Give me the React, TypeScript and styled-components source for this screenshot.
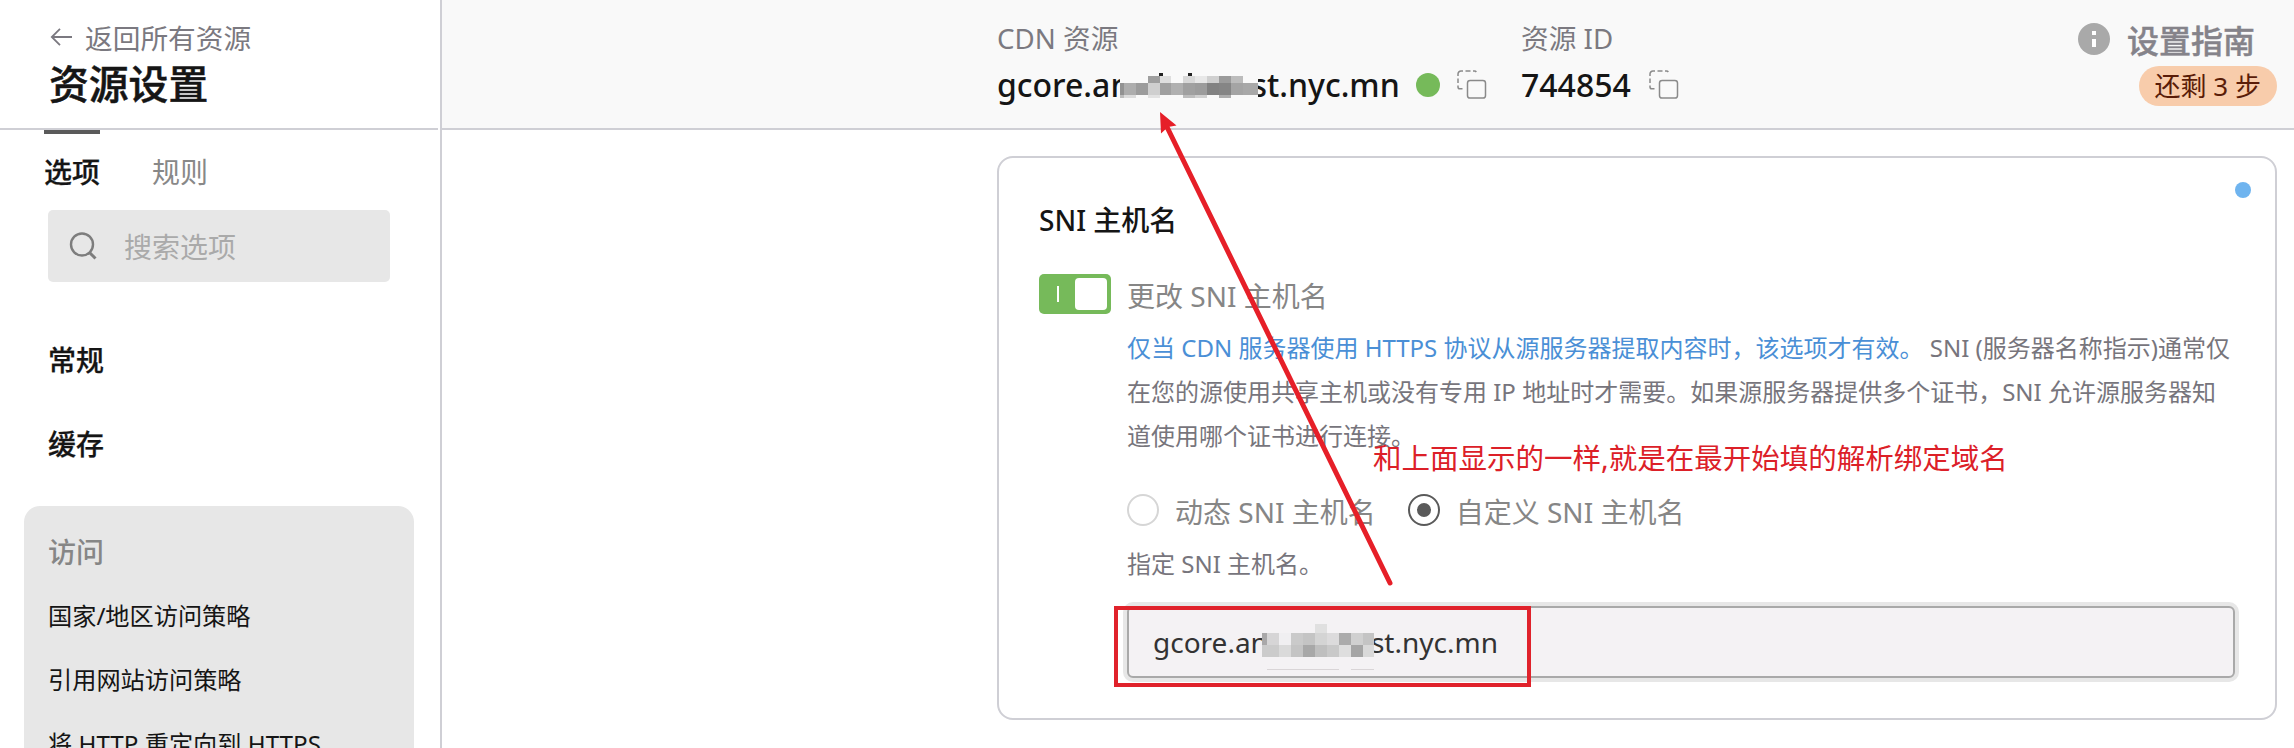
import React from "react";
import styled, { createGlobalStyle } from "styled-components";

const GlobalStyle = createGlobalStyle`
  * { box-sizing: border-box; }
  html, body { margin: 0; padding: 0; background: #fff; }
  body {
    width: 2294px;
    height: 748px;
    overflow: hidden;
    font-family: "Noto Sans", "Noto Sans CJK SC", sans-serif;
    font-size: 28px;
    color: #151515;
  }
`;

const line = "#cfcfd5";

const Page = styled.div`
  position: relative;
  display: flex;
  width: 2294px;
  height: 748px;
  overflow: hidden;
`;

const Sidebar = styled.aside`
  flex: 0 0 442px;
  height: 748px;
  border-right: 2px solid ${line};
  overflow: hidden;
`;

const SideHeader = styled.header`
  width: 438px;
  height: 130px;
  padding: 18px 0 0 49px;
  border-bottom: 2px solid ${line};
`;

const BackLink = styled.a`
  display: flex;
  align-items: center;
  gap: 12px;
  height: 40px;
  font-size: 27.7px;
  line-height: 40px;
  color: #7b7980;
`;

const Title = styled.h1`
  margin: 0;
  font-size: 39.8px;
  line-height: 52px;
  font-weight: 500;
  -webkit-text-stroke: 0.5px currentColor;
`;

const Tabs = styled.nav`
  display: flex;
  gap: 52px;
  padding-left: 44px;
  height: 80px;
`;

const Tab = styled.span<{ $active?: boolean }>`
  border-top: 4px solid ${(p) => (p.$active ? "#5a5a5a" : "transparent")};
  padding-top: 18px;
  line-height: 40px;
  font-weight: ${(p) => (p.$active ? 500 : 400)};
  -webkit-text-stroke: ${(p) => (p.$active ? 0.25 : 0)}px currentColor;
  color: ${(p) => (p.$active ? "#151515" : "#888")};
`;

const Search = styled.div`
  display: flex;
  align-items: center;
  gap: 27px;
  width: 342px;
  height: 72px;
  margin-left: 48px;
  padding-left: 21px;
  border-radius: 5px;
  background: #e7e7e7;
  color: #aaa;
`;

const Groups = styled.div`
  display: flex;
  flex-direction: column;
  gap: 44px;
  padding: 58px 0 42px 48px;
`;

const Group = styled.div<{ $muted?: boolean }>`
  font-weight: 500;
  line-height: 40px;
  -webkit-text-stroke: ${(p) => (p.$muted ? 0 : 0.25)}px currentColor;
  color: ${(p) => (p.$muted ? "#868686" : "#151515")};
`;

const OpenGroup = styled.div`
  width: 390px;
  height: 300px;
  margin-left: 24px;
  padding: 26px 24px;
  border-radius: 16px;
  background: #e7e7e7;
`;

const SubItem = styled.div`
  font-size: 24.2px;
  line-height: 40px;
  margin-top: 24px;
  white-space: nowrap;
`;

const Main = styled.main`
  flex: 1;
  min-width: 0;
`;

const TopBar = styled.header`
  display: flex;
  height: 130px;
  padding: 18px 17px 0 555px;
  background: #f9f9f9;
  border-bottom: 2px solid ${line};
`;

const Fact = styled.div<{ $width: number }>`
  width: ${(p) => p.$width}px;
`;

const FactLabel = styled.div`
  font-size: 27.7px;
  line-height: 40px;
  color: #7b7980;
`;

const FactValue = styled.div`
  display: flex;
  align-items: center;
  height: 54px;
  font-size: 32px;
  line-height: 54px;
  font-weight: 500;
  white-space: pre;
`;

const StatusDot = styled.i`
  width: 24px;
  height: 24px;
  margin: 0 17px 0 16px;
  border-radius: 50%;
  background: #76ba5a;
`;

const ValueGap = styled.span`
  width: 18px;
`;

const Guide = styled.div`
  display: flex;
  flex-direction: column;
  align-items: flex-end;
  margin-left: auto;
`;

const GuideTitle = styled.div`
  display: flex;
  align-items: center;
  gap: 17px;
  height: 42px;
  margin-right: 22px;
  font-size: 32px;
  font-weight: 500;
  -webkit-text-stroke: 0.4px currentColor;
  color: #85838a;
`;

const StepsBadge = styled.div`
  height: 40px;
  margin-top: 6px;
  padding: 0 16px;
  border-radius: 20px;
  background: #f8ccab;
  color: #5a1c08;
  font-size: 26px;
  line-height: 40px;
`;

const Card = styled.section`
  display: flex;
  flex-direction: column;
  position: relative;
  width: 1280px;
  height: 564px;
  margin: 26px 0 0 555px;
  padding: 42px 40px 0;
  border: 2px solid ${line};
  border-radius: 16px;
`;

const ChangedDot = styled.i`
  position: absolute;
  top: 24px;
  right: 24px;
  width: 16px;
  height: 16px;
  border-radius: 50%;
  background: #6fb4ef;
`;

const CardTitle = styled.h2`
  margin: 0;
  font-size: 28px;
  line-height: 40px;
  font-weight: 500;
`;

const SwitchRow = styled.div`
  display: flex;
  gap: 16px;
  margin-top: 34px;
  color: #868686;
  line-height: 44px;
`;

const Switch = styled.div`
  display: flex;
  align-items: center;
  justify-content: space-between;
  width: 72px;
  height: 40px;
  padding: 4px 4px 4px 18px;
  border-radius: 5px;
  background: #76ba5a;
`;

const SwitchMark = styled.i`
  width: 2px;
  height: 16px;
  background: #fff;
`;

const SwitchKnob = styled.i`
  width: 32px;
  height: 32px;
  border-radius: 4px;
  background: #fff;
`;

const Details = styled.div`
  padding-left: 88px;
`;

const Description = styled.p`
  margin: 8px 0 0;
  font-size: 24px;
  line-height: 44px;
  color: #77757c;
  white-space: nowrap;
`;

const Accent = styled.span`
  color: #4a8fd6;
`;

const Radios = styled.div`
  display: flex;
  align-items: center;
  gap: 32px;
  height: 40px;
  margin-top: 32px;
`;

const Radio = styled.label`
  display: flex;
  align-items: center;
  gap: 16px;
  color: #868686;
`;

const RadioText = styled.span`
  padding-top: 4px;
  line-height: 36px;
`;

const RadioRing = styled.i<{ $on?: boolean }>`
  display: flex;
  align-items: center;
  justify-content: center;
  width: 32px;
  height: 32px;
  border: 2px solid ${(p) => (p.$on ? "#5a5a5a" : "#d6d6d6")};
  border-radius: 50%;
  &::after {
    content: "";
    width: 14px;
    height: 14px;
    border-radius: 50%;
    background: ${(p) => (p.$on ? "#5a5a5a" : "transparent")};
  }
`;

const Hint = styled.div`
  margin-top: 14px;
  font-size: 24px;
  line-height: 40px;
  color: #77757c;
`;

const Field = styled.div`
  display: flex;
  align-items: center;
  width: 1108px;
  height: 72px;
  margin-top: 22px;
  padding-left: 24px;
  border: 2px solid #a9a9a9;
  border-radius: 6px;
  box-shadow: 0 0 0 4px #e7e7e7;
  background: #f4f2f4;
  color: #333;
`;

const Redaction = styled.svg<{ $before: number; $after: number; $drop: number }>`
  position: relative;
  flex: none;
  margin: ${(p) => p.$drop}px -${(p) => p.$after}px 0 -${(p) => p.$before}px;
`;

const Highlight = styled.div`
  position: absolute;
  left: 1114px;
  top: 606px;
  width: 417px;
  height: 81px;
  border: 4px solid #e0222b;
`;

const Note = styled.div`
  position: absolute;
  left: 1373px;
  top: 437px;
  font-size: 28.5px;
  line-height: 42px;
  color: #dc2028;
  white-space: nowrap;
`;

const ArrowLayer = styled.svg`
  position: absolute;
  left: 0;
  top: 0;
  pointer-events: none;
`;

type Cell = [x: number, y: number, w: number, h: number, fill: string];

const headerCells: Cell[] = [
  [28, 3, 12, 7, "#9f9f9f"], [40, 3, 11, 7, "#dedede"], [63, 3, 12, 7, "#d8d8d8"],
  [75, 3, 12, 7, "#e8e8e8"], [87, 3, 12, 7, "#d0d0d0"], [99, 3, 12, 7, "#9b9b9b"], [111, 3, 12, 7, "#bcbcbc"],
  [0, 10, 4, 12, "#929292"], [4, 10, 12, 12, "#adadad"], [16, 10, 12, 12, "#9c9c9c"], [28, 10, 12, 12, "#cfcfcf"],
  [40, 10, 11, 12, "#a0a0a0"], [51, 10, 12, 12, "#b0b0b0"], [63, 10, 12, 12, "#a0a0a0"], [75, 10, 12, 12, "#9c9c9c"],
  [87, 10, 12, 12, "#828282"], [99, 10, 12, 12, "#858585"], [111, 10, 12, 12, "#a4a4a4"], [123, 10, 15, 12, "#a8a8a8"],
  [0, 22, 4, 3, "#bdbdbd"], [4, 22, 12, 3, "#dcdcdc"], [28, 22, 12, 3, "#e2e2e2"],
  [63, 22, 12, 3, "#bdbdbd"], [75, 22, 12, 3, "#d0d0d0"], [99, 22, 12, 3, "#adadad"],
  [39, 0, 4, 3, "#222"], [68, 0, 4, 3, "#222"],
];

const fieldXs = [0, 5, 17, 29, 41, 53, 65, 77, 89, 101, 112];
const fieldRows = [
  ["#a9a8a9", "#d6d5d6", "#f0eff1", "#cacaca", "#c4c4c4", "#d4d4d4", "#dcdbdc", "#ababab", "#d0d0d0", "#c4c4c4"],
  ["#cbcbcb", "#cbcbcb", "#dadada", "#c4c4c4", "#a8a8a8", "#bfbfbf", "#c9c9c9", "#dedede", "#a5a5a5", "#d9d9d9"],
];
const fieldCells: Cell[] = [
  [53, 0, 12, 9, "#e0e0e0"],
  ...fieldRows.flatMap((row, r) =>
    row.map((fill, i): Cell => [fieldXs[i], 9 + r * 12, fieldXs[i + 1] - fieldXs[i], 12, fill])
  ),
  [5, 45, 72, 1, "#d9d5d7"],
  [89, 45, 23, 1, "#d9d5d7"],
];

type MosaicProps = {
  cells: Cell[];
  base: Cell;
  width: number;
  height: number;
  before: number;
  after: number;
  drop?: number;
};

const Mosaic = ({ cells, base, width, height, before, after, drop = 0 }: MosaicProps) => (
  <Redaction width={width} height={height} $before={before} $after={after} $drop={drop} shapeRendering="crispEdges">
    {[base, ...cells].map(([x, y, w, h, fill], i) => (
      <rect key={i} x={x} y={y} width={w} height={h} fill={fill} />
    ))}
  </Redaction>
);

const CopyIcon = () => (
  <svg width="30" height="30" viewBox="0 0 30 30" fill="none" stroke="#8a8a8a" strokeWidth="1.5">
    <rect x="10.500" y="10.500" width="18" height="17.500" rx="2.6" />
    <path d="M1 6V4a3 3 0 0 1 3-3h2M8.500 1h5M16 1h1.500q1.200 0 1.800 1M1 8.500v4.500M1 15.500v1.500q0 1.800 1.800 1.800H5.500" />
  </svg>
);

const BackIcon = () => (
  <svg width="24" height="20" viewBox="0 0 24 20" fill="none" stroke="#7b7980" strokeWidth="1.8">
    <path d="M23 9H3M11 .8 2.800 9 11 17.200" />
  </svg>
);

const SearchIcon = () => (
  <svg width="28" height="28" viewBox="0 0 28 28" fill="none" stroke="#7d7d7d" strokeWidth="2.4">
    <circle cx="13" cy="12.5" r="11" />
    <path d="m20.500 20.500 6 6" strokeWidth="3" />
  </svg>
);

const InfoIcon = () => (
  <svg width="32" height="32" viewBox="0 0 32 32">
    <circle cx="16" cy="16" r="16" fill="#a9a9a9" />
    <path d="M14 8h4v4h-4zM14 16h4v8h-4z" fill="#fff" />
  </svg>
);

export default function App() {
  return (
    <>
      <GlobalStyle />
      <Page>
        <Sidebar>
          <SideHeader>
            <BackLink><BackIcon />返回所有资源</BackLink>
            <Title>资源设置</Title>
          </SideHeader>
          <Tabs>
            <Tab $active>选项</Tab>
            <Tab>规则</Tab>
          </Tabs>
          <Search><SearchIcon />搜索选项</Search>
          <Groups>
            <Group>常规</Group>
            <Group>缓存</Group>
          </Groups>
          <OpenGroup>
            <Group $muted>访问</Group>
            <SubItem>国家/地区访问策略</SubItem>
            <SubItem>引用网站访问策略</SubItem>
            <SubItem>将 HTTP 重定向到 HTTPS</SubItem>
          </OpenGroup>
        </Sidebar>
        <Main>
          <TopBar>
            <Fact $width={524}>
              <FactLabel>CDN 资源</FactLabel>
              <FactValue>
                gcore.an
                <Mosaic cells={headerCells} width={138} height={25} before={10} after={7} base={[0, 3, 138, 22, "#f9f9f9"]} />
                st.nyc.mn
                <StatusDot />
                <CopyIcon />
              </FactValue>
            </Fact>
            <Fact $width={200}>
              <FactLabel>资源 ID</FactLabel>
              <FactValue>744854<ValueGap /><CopyIcon /></FactValue>
            </Fact>
            <Guide>
              <GuideTitle><InfoIcon />设置指南</GuideTitle>
              <StepsBadge>还剩 3 步</StepsBadge>
            </Guide>
          </TopBar>
          <Card>
            <ChangedDot />
            <CardTitle>SNI 主机名</CardTitle>
            <SwitchRow>
              <Switch><SwitchMark /><SwitchKnob /></Switch>
              更改 SNI 主机名
            </SwitchRow>
            <Details>
              <Description>
                <Accent>仅当 CDN 服务器使用 HTTPS 协议从源服务器提取内容时，该选项才有效。</Accent> SNI (服务器名称指示)通常仅
                <br />
                在您的源使用共享主机或没有专用 IP 地址时才需要。如果源服务器提供多个证书，SNI 允许源服务器知
                <br />
                道使用哪个证书进行连接。
              </Description>
              <Radios>
                <Radio><RadioRing /><RadioText>动态 SNI 主机名</RadioText></Radio>
                <Radio><RadioRing $on /><RadioText>自定义 SNI 主机名</RadioText></Radio>
              </Radios>
              <Hint>指定 SNI 主机名。</Hint>
              <Field>
                gcore.an
                <Mosaic cells={fieldCells} width={112} height={46} before={6} after={3} drop={10} base={[0, 9, 112, 24, "#f4f2f4"]} />
                st.nyc.mn
              </Field>
            </Details>
          </Card>
        </Main>
        <Note>和上面显示的一样,就是在最开始填的解析绑定域名</Note>
        <Highlight />
        <ArrowLayer width="2294" height="748">
          <path d="M1167 127 1390 583" stroke="#e61f28" strokeWidth="5" strokeLinecap="round" />
          <path d="M1160 112 1176.500 125.500 1168 127 1161 133.500Z" fill="#e61f28" />
        </ArrowLayer>
      </Page>
    </>
  );
}
